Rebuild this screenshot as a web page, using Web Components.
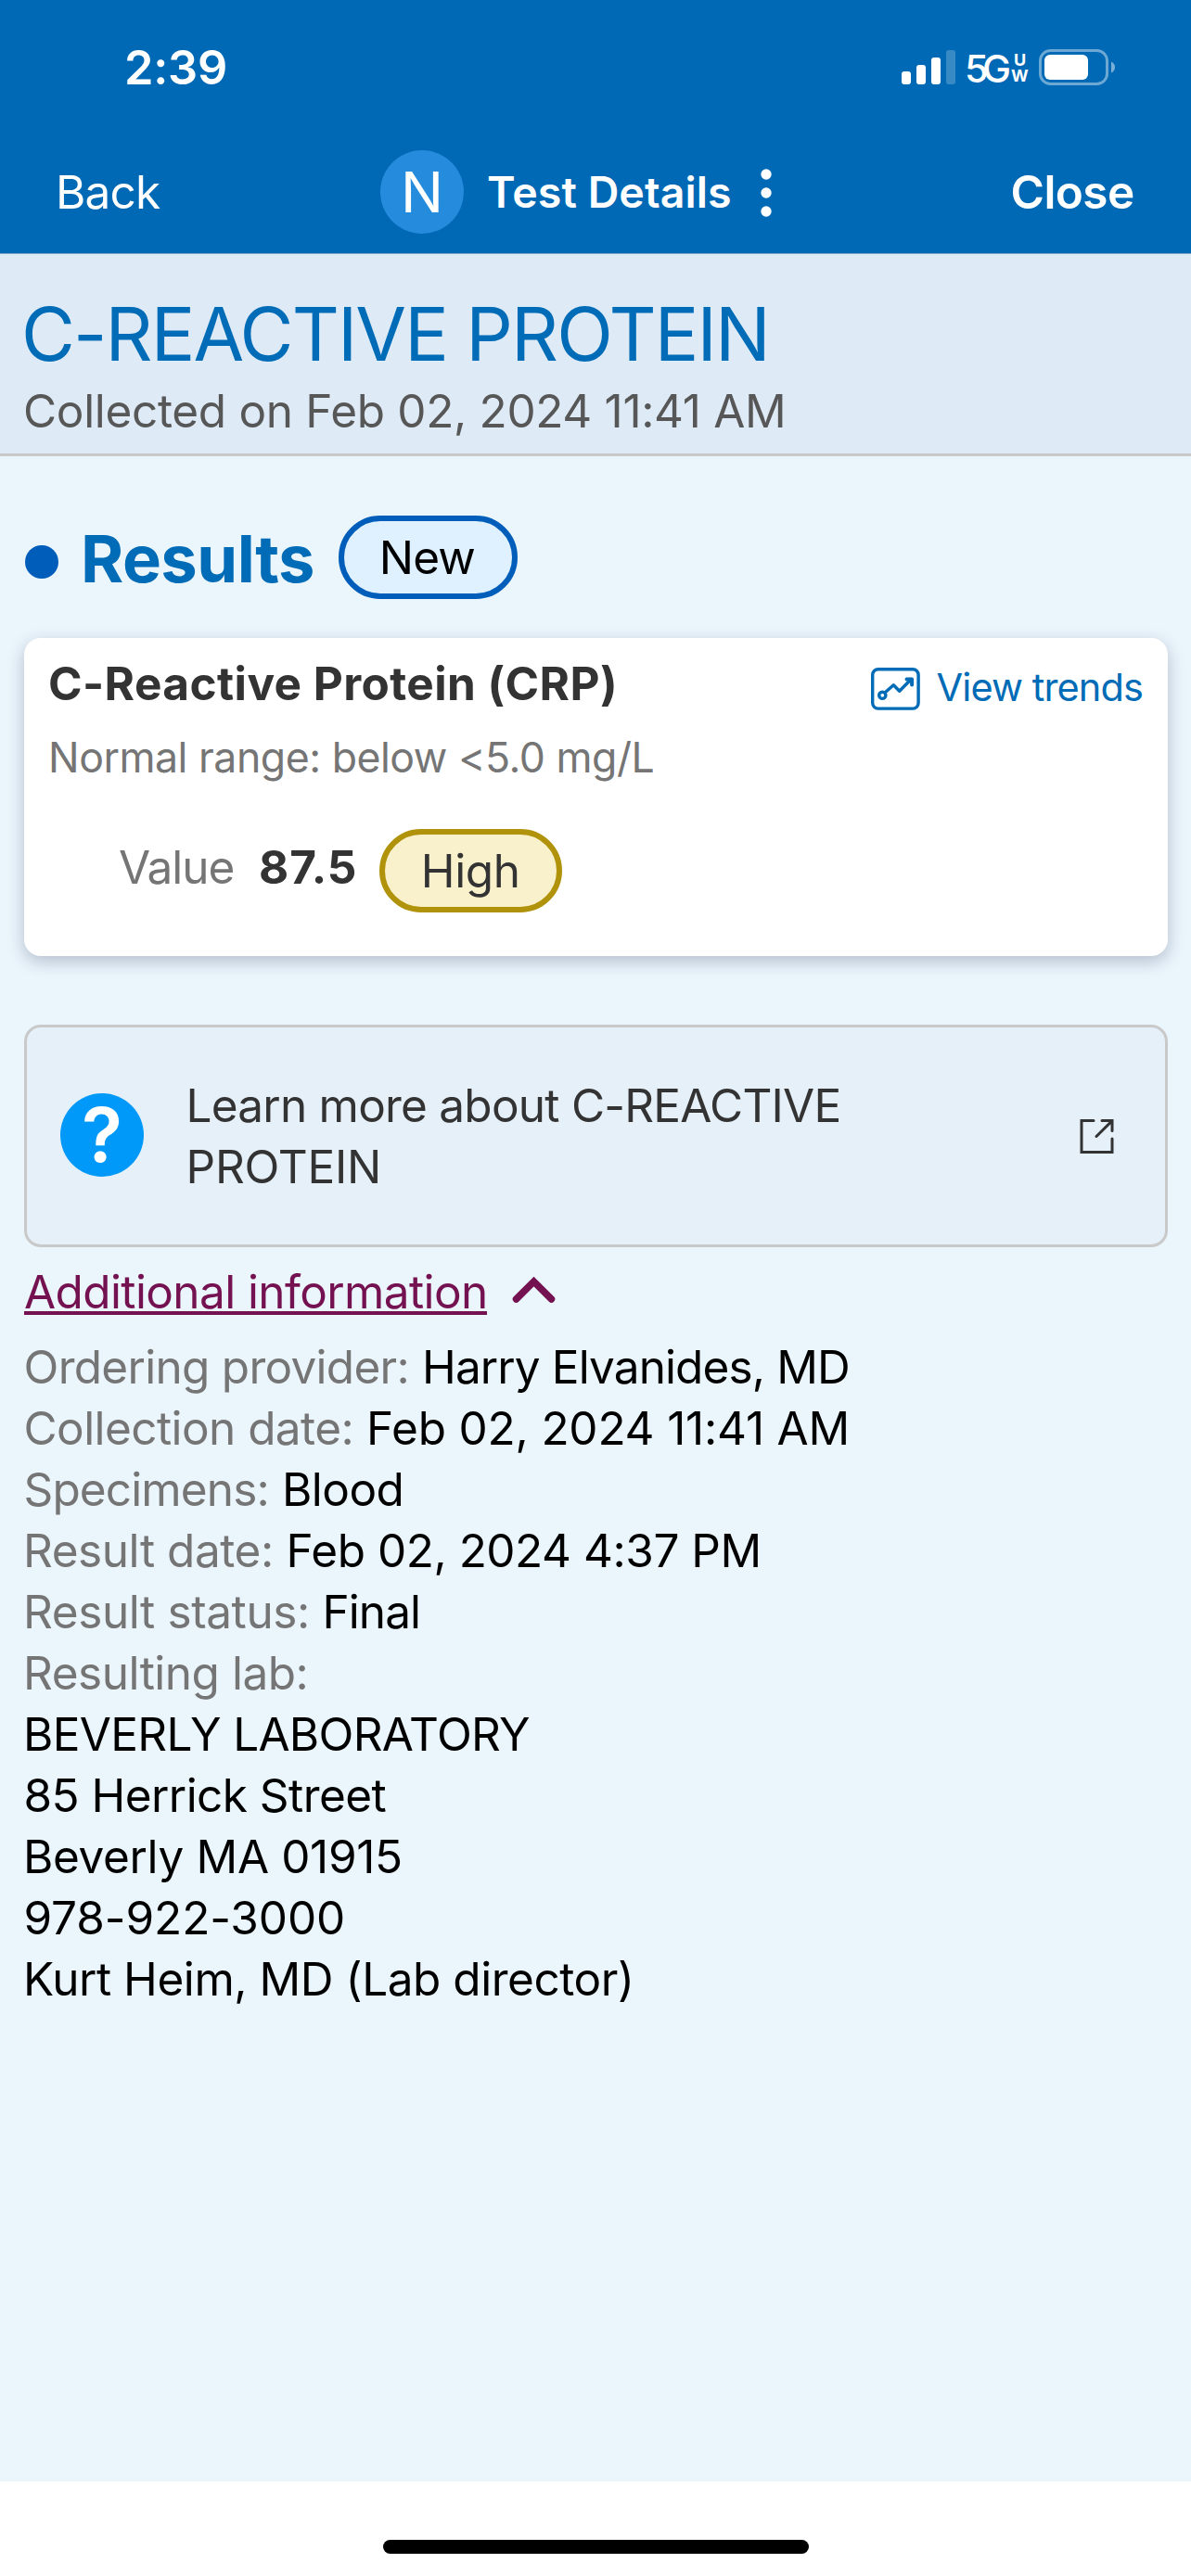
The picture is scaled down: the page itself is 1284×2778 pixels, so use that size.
<!DOCTYPE html>
<html lang="en">
<head>
<meta charset="utf-8">
<title>Test Details</title>
<style>
body {
  margin: 0;
  background: #fff;
  font-family: Inter, "Liberation Sans", sans-serif;
  font-size: 49.5px;
}
</style>
</head>
<body>
<test-page>
  <status-bar slot="top" time="2:39"></status-bar>
  <nav-bar slot="top" initial="N"></nav-bar>
  <title-block></title-block>
  <results-head></results-head>
  <result-card></result-card>
  <learn-more></learn-more>
  <more-info>
    <info-row label="Ordering provider:" lw="411" value="Harry Elvanides, MD" vw="455"></info-row>
    <info-row label="Collection date:" lw="351" value="Feb 02, 2024 11:41 AM" vw="513.5"></info-row>
    <info-row label="Specimens:" lw="260" value="Blood" vw="124.5"></info-row>
    <info-row stem label="Result date:" lw="263" value="Feb 02, 2024 4:37 PM" vw="505"></info-row>
    <info-row stem label="Result status:" lw="302" value="Final" vw="99.5"></info-row>
    <info-row stem label="Resulting lab:" lw="300.5"></info-row>
    <info-row stem value="BEVERLY LABORATORY" vw="542"></info-row>
    <info-row value="85 Herrick Street" vw="389"></info-row>
    <info-row stem value="Beverly MA 01915" vw="403"></info-row>
    <info-row value="978-922-3000" vw="342.5"></info-row>
    <info-row stem value="Kurt Heim, MD (Lab director)" vw="650"></info-row>
  </more-info>
</test-page>

<script>
const ctx = document.createElement('canvas').getContext('2d')

function define(name, render) {
  customElements.define(name, class extends HTMLElement {
    connectedCallback() {
      if (this.shadowRoot) return
      this.attachShadow({ mode: 'open' }).innerHTML = render(this)
    }
  })
}

// one line of text, tracked so that its ink is `w` pixels wide
class TextLine extends HTMLElement {
  connectedCallback() {
    if (this.shadowRoot) return
    this.attachShadow({ mode: 'open' }).innerHTML = `
<style>
:host { display: block; flex: none; line-height: 60px; }
span { display: block; white-space: pre; }
</style>
<span><slot></slot></span>`
    const text = this.textContent
    const cs = getComputedStyle(this)
    ctx.font = `${cs.fontWeight} ${cs.fontSize} ${cs.fontFamily}`
    const m = ctx.measureText(text)
    const ink = m.actualBoundingBoxRight + m.actualBoundingBoxLeft
    const w = Number(this.getAttribute('w')) || ink
    const track = text.length > 1 ? (w - ink) / (text.length - 1) : 0
    const span = this.shadowRoot.querySelector('span')
    span.style.letterSpacing = track + 'px'
    span.style.marginLeft = m.actualBoundingBoxLeft + 'px'
    this.style.width = (text.length > 1 ? w : ink) + 'px'
  }
}
customElements.define('text-line', TextLine)

define('test-page', () => `
<style>
:host { display: flex; flex-direction: column; width: 1284px; height: 2778px; overflow: hidden; }
main { flex: 1; background: #ebf5fc; }
footer { height: 102px; background: #fff; display: flex; justify-content: center; }
footer i { width: 459px; height: 15px; margin-top: 63px; border-radius: 8px; background: #000; }
</style>
<slot name="top"></slot>
<main><slot></slot></main>
<footer><i></i></footer>`)

define('status-bar', el => `
<style>
:host { display: flex; align-items: center; height: 145px; box-sizing: border-box; padding: 0 81px 0 137px; background: #0069b5; color: #fff; }
.time { font-size: 50.5px; font-weight: 600; margin-right: auto; }
svg { display: block; }
.net { font-size: 41.5px; font-weight: 500; margin: 3px 2px 0 12px; }
.uw { display: flex; flex-direction: column; margin: 1px 11px 0 0; align-items: center; }
.uw text-line { font-size: 18px; font-weight: 700; line-height: 17px; }
</style>
<text-line class="time" w="106">${el.getAttribute('time')}</text-line>
<svg width="58" height="37" viewBox="0 0 58 37" fill="#fff">
  <rect x="0" y="23" width="10" height="14" rx="3"/>
  <rect x="16" y="16" width="10" height="21" rx="3"/>
  <rect x="32" y="8" width="10" height="29" rx="3"/>
  <rect x="48" y="0" width="10" height="37" rx="3" opacity=".22"/>
</svg>
<text-line class="net" w="46">5G</text-line>
<div class="uw"><text-line>U</text-line><text-line>W</text-line></div>
<svg width="83" height="39" viewBox="0 0 83 39">
  <rect x="1.5" y="1.5" width="72" height="36" rx="11" fill="none" stroke="#fff" stroke-width="3" opacity=".42"/>
  <rect x="6" y="6" width="47" height="27" rx="6" fill="#fff"/>
  <path d="M78 13.5q4 2 4 6t-4 6z" fill="#fff" opacity=".48"/>
</svg>`)

define('nav-bar', el => `
<style>
:host { display: flex; align-items: center; height: 129px; box-sizing: border-box; padding: 0 62px 5px 64px; background: #0069b5; border-bottom: 1px solid #7fa6c6; color: #fff; }
.badge { width: 90px; height: 90px; margin-left: 237px; border-radius: 50%; background: #258bdc; display: flex; align-items: center; justify-content: center; font-size: 61px; }
.title { font-size: 46.5px; font-weight: 600; margin-left: 26px; }
svg { display: block; margin: 2px auto 0 33px; }
.close { font-weight: 600; }
</style>
<text-line w="109">Back</text-line>
<div class="badge"><text-line>${el.getAttribute('initial')}</text-line></div>
<text-line class="title" w="261">Test Details</text-line>
<svg width="12" height="52" viewBox="0 0 12 52" fill="#fff">
  <circle cx="6" cy="6" r="5.7"/><circle cx="6" cy="26" r="5.7"/><circle cx="6" cy="46" r="5.7"/>
</svg>
<text-line class="close" w="130.5">Close</text-line>`)

define('title-block', () => `
<style>
:host { display: flow-root; height: 218px; box-sizing: border-box; padding: 38px 27px 0; background: #deebf7; border-bottom: 3px solid #c8c8c8; }
.name { font-size: 79.3px; line-height: 96px; color: #006bb6; }
.when { margin-top: 5px; color: #575757; }
</style>
<text-line class="name" w="797">C-REACTIVE PROTEIN</text-line>
<text-line class="when" w="817">Collected on Feb 02, 2024 11:41 AM</text-line>`)

define('pill-badge', () => `
<style>
:host { display: flex; align-items: center; justify-content: center; box-sizing: border-box; height: 90px; border: 6px solid; border-radius: 45px; }
</style>
<slot></slot>`)

define('results-head', () => `
<style>
:host { display: flex; align-items: center; padding: 64px 26px 0; }
i { width: 36px; height: 36px; margin: 10px 28px 0 1px; border-radius: 50%; background: #005eba; }
.h { font-size: 70.5px; font-weight: 700; color: #006bb6; margin-top: 3px; }
pill-badge { width: 193px; margin-left: 28px; padding-left: 1px; background: #dff0ff; border-color: #005eba; }
</style>
<i></i>
<text-line class="h" w="246">Results</text-line>
<pill-badge><text-line w="98.5">New</text-line></pill-badge>`)

define('result-card', () => `
<style>
:host { display: block; box-sizing: border-box; height: 343px; margin: 42px 25px 0 26px; padding: 19px 28px 0 28px; border-radius: 18px; background: #fff; color: #333; box-shadow: 0 6px 18px rgba(20, 30, 70, .25); }
.top, .row, .link { display: flex; align-items: center; }
.top { height: 60px; justify-content: space-between; }
.link { color: #006bb6; font-size: 41.5px; gap: 18.500px; margin-top: 12px; }
.link text-line { margin-top: -5px; }
.grey { color: #757575; }
.range { font-size: 44.6px; margin: 20px 0 0 1px; }
.row { margin: 47px 0 0 75px; }
.row > text-line { margin-top: -7.5px; }
.row .bold { font-weight: 700; margin: -7.5px 26.5px 0 29.5px; }
pill-badge { width: 197px; background: #f9f1cc; border-color: #b0930b; }
</style>
<div class="top">
  <text-line w="608" style="font-weight: 700">C-Reactive Protein (CRP)</text-line>
  <div class="link">
    <svg width="53" height="46" viewBox="0 0 53 46" fill="none" stroke="#006bb6" stroke-width="3.4">
      <rect x="1.7" y="1.7" width="49.4" height="42.4" rx="6"/>
      <circle cx="12.3" cy="29.8" r="3.6"/>
      <path d="M15 27l9.3-8.3 6.4 6.6L43 12.8" stroke-linejoin="round"/>
      <path d="M38.5 12.500h5.600v6" stroke-width="4" stroke-linecap="round" stroke-linejoin="round"/>
    </svg>
    <text-line w="220.5">View trends</text-line>
  </div>
</div>
<text-line class="grey range" w="649.5">Normal range: below &lt;5.0 mg/L</text-line>
<div class="row">
  <text-line class="grey" w="122.5">Value</text-line>
  <text-line class="bold" w="101.8">87.5</text-line>
  <pill-badge><text-line w="100">High</text-line></pill-badge>
</div>`)

define('learn-more', () => `
<style>
:host { display: flex; align-items: center; box-sizing: border-box; height: 240px; margin: 74px 25px 0 26px; padding: 0 55px 0 36px; border: 3px solid #c9c9c9; border-radius: 18px; background: #e5f0f9; color: #333; }
.q { width: 90px; height: 90px; margin: 0 49.5px 2px 0; border-radius: 50%; background: #0099f9; color: #fff; font-size: 81px; font-weight: 600; display: flex; align-items: center; justify-content: center; }
p { flex: 1; margin: 0; }
p text-line { line-height: 66px; }
</style>
<div class="q"><text-line>?</text-line></div>
<p><text-line w="700">Learn more about C-REACTIVE</text-line><text-line w="202.5">PROTEIN</text-line></p>
<svg width="37" height="37" viewBox="0 0 37 37" fill="none" stroke="#333" stroke-width="3" stroke-linecap="round">
  <path d="M15 1.600H2v33.800h33V21"/>
  <path d="M24 1.600h11v11M35 1.600L18 18.500"/>
</svg>`)

define('more-info', () => `
<style>
:host { display: block; margin: 15px 26px 0; }
.toggle { display: flex; align-items: center; height: 66px; color: #741150; }
.u { height: 58px; padding: 0 2px 0 1px; box-sizing: border-box; border-bottom: 4px solid; margin-bottom: 8px; }
.u text-line { line-height: 66px; height: 54px; }
svg { display: block; margin: -4px 0 0 27px; }
.rows { margin: 15px 1.5px 0; }
</style>
<div class="toggle">
  <div class="u"><text-line w="496">Additional information</text-line></div>
  <svg width="47" height="30" viewBox="0 0 47 30" fill="none" stroke="#741150" stroke-width="7.500" stroke-linecap="round"><path d="M4.500 25L23.500 6L42.500 25"/></svg>
</div>
<div class="rows"><slot></slot></div>`)

define('info-row', el => {
  const label = el.getAttribute('label')
  const value = el.getAttribute('value')
  return `
<style>
:host { display: flex; gap: 20.5px; height: 66px; align-items: center; color: #000; }
:host([stem]) { padding-left: 1.5px; }
.label { color: #757575; }
</style>
${label ? `<text-line class="label" w="${el.getAttribute('lw')}">${label}</text-line>` : ''}
${value ? `<text-line w="${el.getAttribute('vw')}">${value}</text-line>` : ''}`
})
</script>
</body>
</html>
